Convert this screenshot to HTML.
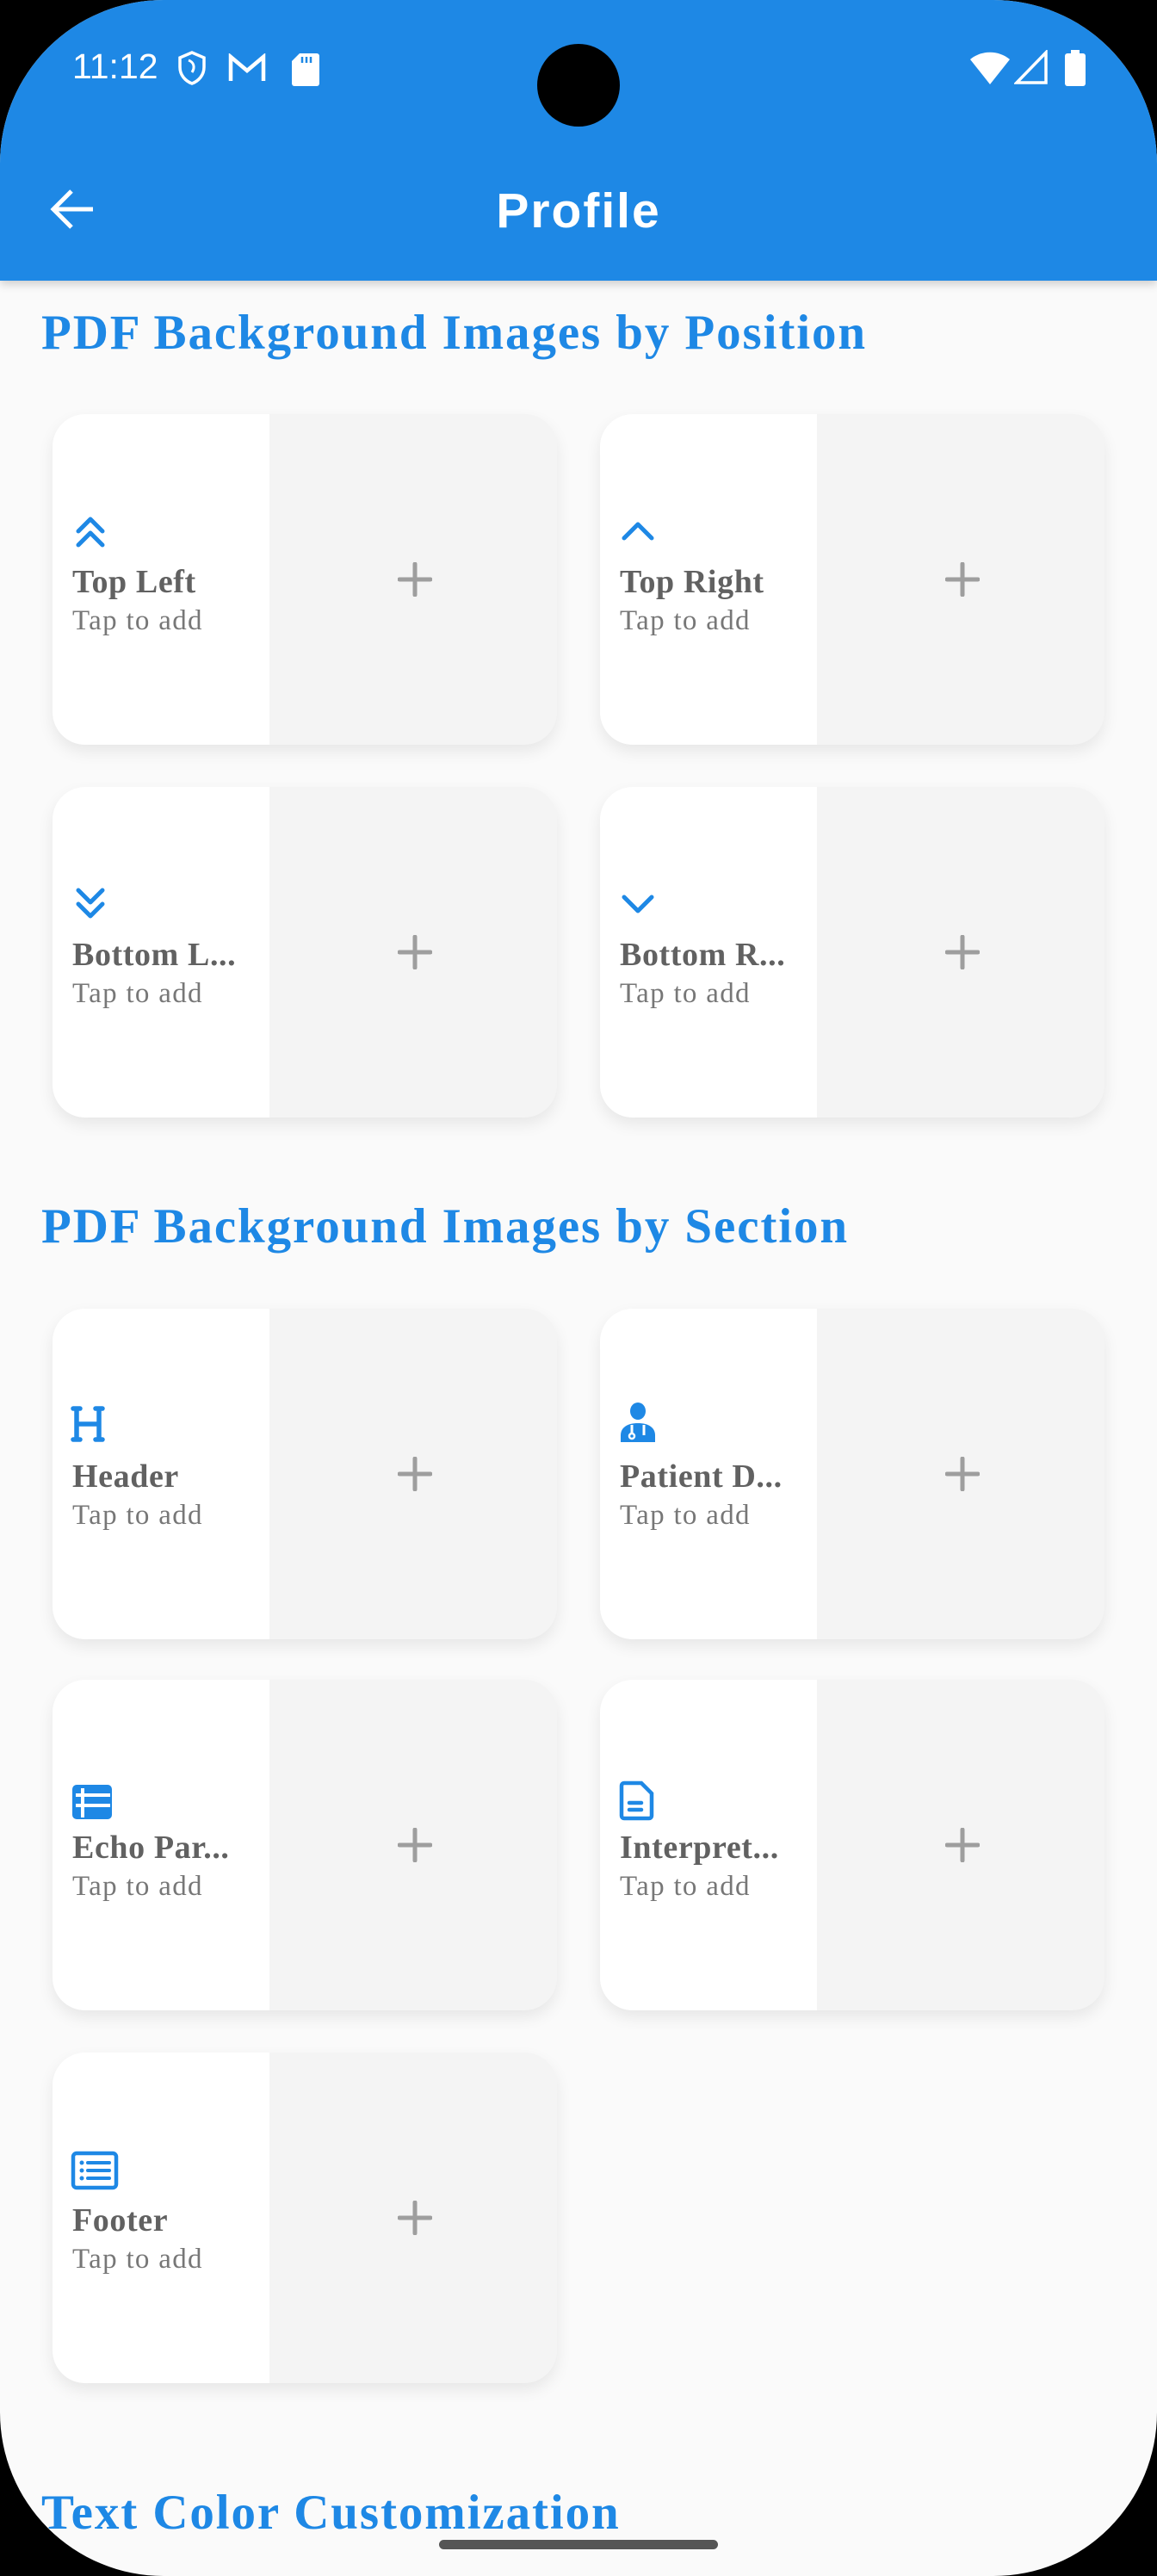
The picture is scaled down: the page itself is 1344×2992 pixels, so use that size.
<!DOCTYPE html>
<html><head><meta charset="utf-8"><style>
*{margin:0;padding:0;box-sizing:border-box}
html,body{width:1344px;height:2992px;overflow:hidden;background:#000}
#scr{position:absolute;left:0;top:0;width:1344px;height:2992px;background:#fafafa;border-radius:190px;overflow:hidden}
#bar{position:absolute;left:0;top:0;width:1344px;height:326px;background:#1e88e5;box-shadow:0 4px 10px rgba(0,0,0,.18)}
.st{position:absolute;color:#fff;font-family:"Liberation Sans",sans-serif}
.sec{position:absolute;left:48px;font-family:"Liberation Serif",serif;font-weight:bold;font-size:57px;letter-spacing:1.9px;color:#1e88e5;white-space:nowrap}
.card{position:absolute;width:586px;height:384px;border-radius:38px;background:#f4f4f4;overflow:hidden;box-shadow:0 8px 18px rgba(0,0,0,.08)}
.card .l{position:absolute;left:0;top:0;width:252px;height:384px;background:#fff}
.card svg.ic{position:absolute;left:22px;top:114px}
.card .t{position:absolute;left:23px;top:173px;font-family:"Liberation Serif",serif;font-weight:bold;font-size:38px;letter-spacing:0.6px;color:#616161;white-space:nowrap}
.card .s{position:absolute;left:23px;top:222px;font-family:"Liberation Serif",serif;font-size:33px;letter-spacing:1.3px;color:#777;white-space:nowrap}
.card .p{position:absolute;left:401px;top:172px}
</style></head><body>
<div id="scr">
<div id="bar">
 <div class="st" style="left:84px;top:54px;font-size:41px">11:12</div>
 <svg style="position:absolute;left:204px;top:58px" width="38" height="42" viewBox="0 0 38 42"><path d="M19 3L5 9v11c0 9 6 16 14 19 8-3 14-10 14-19V9z" fill="none" stroke="#fff" stroke-width="3.5"/><path d="M15 12c6 2 8 8 4 14" fill="none" stroke="#fff" stroke-width="3"/></svg>
 <svg style="position:absolute;left:265px;top:62px" width="44" height="34" viewBox="0 0 44 34"><path d="M3 32V4l19 16L41 4v28" fill="none" stroke="#fff" stroke-width="4.5"/></svg>
 <svg style="position:absolute;left:338px;top:60px" width="34" height="40" viewBox="0 0 34 40"><path d="M10 2h20a3 3 0 0 1 3 3v32a3 3 0 0 1-3 3H4a3 3 0 0 1-3-3V11z" fill="#fff"/><path d="M13 6v7M18 6v7M23 6v7" stroke="#1e88e5" stroke-width="2.5"/></svg>
 <div style="position:absolute;left:624px;top:51px;width:96px;height:96px;border-radius:50%;background:#000"></div>
 <svg style="position:absolute;left:1126px;top:58px" width="48" height="40" viewBox="0 0 48 40"><path d="M24 40L1 11C14 0 34 0 47 11z" fill="#fff"/></svg>
 <svg style="position:absolute;left:1178px;top:58px" width="40" height="40" viewBox="0 0 40 40"><path d="M37 3v35H3z" fill="none" stroke="#fff" stroke-width="3.5"/></svg>
 <svg style="position:absolute;left:1236px;top:58px" width="26" height="42" viewBox="0 0 26 42"><rect x="8" y="0" width="10" height="6" fill="#fff"/><rect x="1" y="4" width="24" height="38" rx="3" fill="#fff"/></svg>
 <svg style="position:absolute;left:56px;top:218px" width="56" height="50" viewBox="0 0 56 50"><path d="M52 25H6M27 4L6 25l21 21" fill="none" stroke="#fff" stroke-width="5"/></svg>
 <div class="st" style="left:0;width:1344px;text-align:center;top:212px;font-size:57px;font-weight:bold;letter-spacing:2px">Profile</div>
</div>

<div class="sec" style="top:354px">PDF Background Images by Position</div>
<div class="sec" style="top:1392px">PDF Background Images by Section</div>
<div class="sec" style="top:2886px">Text Color Customization</div>

<div class="card" style="left:61px;top:481px"><div class="l"></div>
 <svg class="ic" width="44" height="44" viewBox="0 0 44 44"><path d="M8 22L22 8l14 14M8 38l14-14 14 14" fill="none" stroke="#1e88e5" stroke-width="5" stroke-linecap="round" stroke-linejoin="round"/></svg>
 <div class="t">Top Left</div><div class="s">Tap to add</div>
 <svg class="p" width="40" height="40"><path d="M20 2v36M2 20h36" stroke="#9e9e9e" stroke-width="5" stroke-linecap="round"/></svg></div>
<div class="card" style="left:697px;top:481px"><div class="l"></div>
 <svg class="ic" width="44" height="44" viewBox="0 0 44 44"><path d="M6 30L22 14l16 16" fill="none" stroke="#1e88e5" stroke-width="5" stroke-linecap="round" stroke-linejoin="round"/></svg>
 <div class="t">Top Right</div><div class="s">Tap to add</div>
 <svg class="p" width="40" height="40"><path d="M20 2v36M2 20h36" stroke="#9e9e9e" stroke-width="5" stroke-linecap="round"/></svg></div>
<div class="card" style="left:61px;top:914px"><div class="l"></div>
 <svg class="ic" width="44" height="44" viewBox="0 0 44 44"><path d="M8 6l14 14 14-14M8 22l14 14 14-14" fill="none" stroke="#1e88e5" stroke-width="5" stroke-linecap="round" stroke-linejoin="round"/></svg>
 <div class="t">Bottom L...</div><div class="s">Tap to add</div>
 <svg class="p" width="40" height="40"><path d="M20 2v36M2 20h36" stroke="#9e9e9e" stroke-width="5" stroke-linecap="round"/></svg></div>
<div class="card" style="left:697px;top:914px"><div class="l"></div>
 <svg class="ic" width="44" height="44" viewBox="0 0 44 44"><path d="M6 14l16 16 16-16" fill="none" stroke="#1e88e5" stroke-width="5" stroke-linecap="round" stroke-linejoin="round"/></svg>
 <div class="t">Bottom R...</div><div class="s">Tap to add</div>
 <svg class="p" width="40" height="40"><path d="M20 2v36M2 20h36" stroke="#9e9e9e" stroke-width="5" stroke-linecap="round"/></svg></div>

<div class="card" style="left:61px;top:1520px"><div class="l"></div>
 <svg class="ic" width="48" height="48" viewBox="0 0 48 48" style="left:20px;top:110px"><path d="M8 6v36M34 6v36M8 24h26M4 6h8M30 6h8M4 42h8M30 42h8" fill="none" stroke="#1e88e5" stroke-width="5.5" stroke-linecap="round"/></svg>
 <div class="t">Header</div><div class="s">Tap to add</div>
 <svg class="p" width="40" height="40"><path d="M20 2v36M2 20h36" stroke="#9e9e9e" stroke-width="5" stroke-linecap="round"/></svg></div>
<div class="card" style="left:697px;top:1520px"><div class="l"></div>
 <svg class="ic" width="48" height="48" viewBox="0 0 48 48" style="left:20px;top:108px"><ellipse cx="24" cy="11" rx="9" ry="10" fill="#1e88e5"/><path d="M4 47v-8c0-9 8-14 20-14s20 5 20 14v8z" fill="#1e88e5"/><path d="M17 27v10M31 27v12" stroke="#fff" stroke-width="3"/><circle cx="17" cy="40" r="3" fill="none" stroke="#fff" stroke-width="2.5"/></svg>
 <div class="t">Patient D...</div><div class="s">Tap to add</div>
 <svg class="p" width="40" height="40"><path d="M20 2v36M2 20h36" stroke="#9e9e9e" stroke-width="5" stroke-linecap="round"/></svg></div>
<div class="card" style="left:61px;top:1951px"><div class="l"></div>
 <svg class="ic" width="48" height="48" viewBox="0 0 48 48" style="left:21px;top:118px"><rect x="2" y="4" width="46" height="40" rx="5" fill="#1e88e5"/><path d="M6 16h40M6 28h40M14 8v34" stroke="#fff" stroke-width="4"/></svg>
 <div class="t">Echo Par...</div><div class="s">Tap to add</div>
 <svg class="p" width="40" height="40"><path d="M20 2v36M2 20h36" stroke="#9e9e9e" stroke-width="5" stroke-linecap="round"/></svg></div>
<div class="card" style="left:697px;top:1951px"><div class="l"></div>
 <svg class="ic" width="48" height="48" viewBox="0 0 48 48" style="left:22px;top:116px"><path d="M6 4h20l12 12v26a3 3 0 0 1-3 3H6a3 3 0 0 1-3-3V7a3 3 0 0 1 3-3z" fill="none" stroke="#1e88e5" stroke-width="4.5"/><path d="M12 27h14M12 35h14" stroke="#1e88e5" stroke-width="4.5" stroke-linecap="round"/></svg>
 <div class="t">Interpret...</div><div class="s">Tap to add</div>
 <svg class="p" width="40" height="40"><path d="M20 2v36M2 20h36" stroke="#9e9e9e" stroke-width="5" stroke-linecap="round"/></svg></div>
<div class="card" style="left:61px;top:2384px"><div class="l"></div>
 <svg class="ic" width="56" height="48" viewBox="0 0 56 48" style="left:21px;top:114px"><rect x="3" y="3" width="50" height="40" rx="4" fill="none" stroke="#1e88e5" stroke-width="4.5"/><circle cx="13" cy="14" r="2.5" fill="#1e88e5"/><circle cx="13" cy="23" r="2.5" fill="#1e88e5"/><circle cx="13" cy="32" r="2.5" fill="#1e88e5"/><path d="M20 14h25M20 23h25M20 32h25" stroke="#1e88e5" stroke-width="4" stroke-linecap="round"/></svg>
 <div class="t">Footer</div><div class="s">Tap to add</div>
 <svg class="p" width="40" height="40"><path d="M20 2v36M2 20h36" stroke="#9e9e9e" stroke-width="5" stroke-linecap="round"/></svg></div>

<div style="position:absolute;left:510px;top:2950px;width:324px;height:11px;border-radius:6px;background:#555"></div>
</div>
</body></html>
